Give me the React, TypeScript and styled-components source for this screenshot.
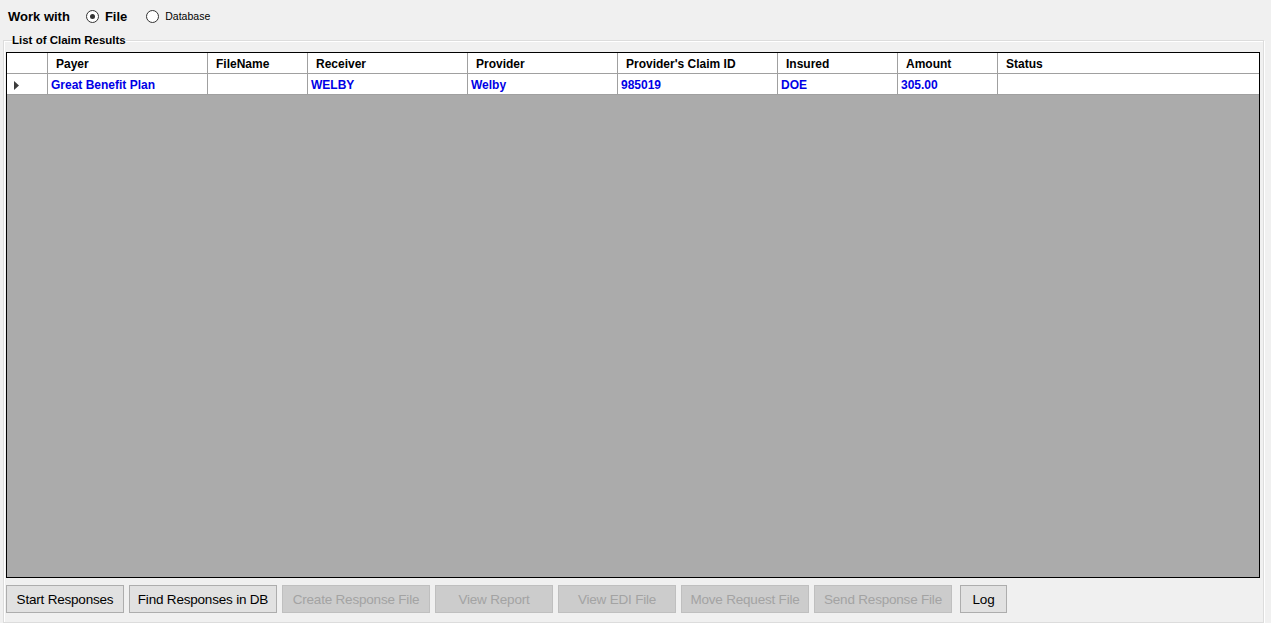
import styled, { createGlobalStyle } from "styled-components";

const GlobalStyle = createGlobalStyle`
  html, body {
    margin: 0;
    padding: 0;
    background: #f0f0f0;
  }
  body {
    font-family: "Liberation Sans", Arial, sans-serif;
  }
`;

type Col = { key: string; title: string; width: number | null };

const columns: Col[] = [
  { key: "payer", title: "Payer", width: 160 },
  { key: "file", title: "FileName", width: 100 },
  { key: "receiver", title: "Receiver", width: 160 },
  { key: "provider", title: "Provider", width: 150 },
  { key: "claim", title: "Provider's Claim ID", width: 160 },
  { key: "insured", title: "Insured", width: 120 },
  { key: "amount", title: "Amount", width: 100 },
  { key: "status", title: "Status", width: null },
];

const rows: Record<string, string>[] = [
  {
    payer: "Great Benefit Plan",
    file: "",
    receiver: "WELBY",
    provider: "Welby",
    claim: "985019",
    insured: "DOE",
    amount: "305.00",
    status: "",
  },
];

const buttons = [
  { label: "Start Responses", width: 118, disabled: false },
  { label: "Find Responses in DB", width: 148, disabled: false },
  { label: "Create Response File", width: 148, disabled: true },
  { label: "View Report", width: 118, disabled: true },
  { label: "View EDI File", width: 118, disabled: true },
  { label: "Move Request File", width: 128, disabled: true },
  { label: "Send Response File", width: 138, disabled: true },
  { label: "Log", width: 47, disabled: false, extra: 3 },
];

const template = `41px ${columns
  .map((c) => (c.width ? `${c.width}px` : "1fr"))
  .join(" ")}`;

function App() {
  return (
    <Window>
      <GlobalStyle />
      <TopBar>
        <Caption>Work with</Caption>
        <RadioOption>
          <Radio $checked />
          <RadioLabel $bold>File</RadioLabel>
        </RadioOption>
        <RadioOption>
          <Radio />
          <RadioLabel>Database</RadioLabel>
        </RadioOption>
      </TopBar>
      <Group>
        <Legend>List of Claim Results</Legend>
        <Grid>
          <Row style={{ gridTemplateColumns: template }}>
            <HeadCell />
            {columns.map((c) => (
              <HeadCell key={c.key} $last={!c.width}>
                {c.title}
              </HeadCell>
            ))}
          </Row>
          {rows.map((r, i) => (
            <Row key={i} style={{ gridTemplateColumns: template }}>
              <DataCell $rowHeader>
                <svg width="5" height="9" viewBox="0 0 5 9">
                  <path d="M0 0 L5 4.5 L0 9 Z" fill="#3c3c3c" />
                </svg>
              </DataCell>
              {columns.map((c) => (
                <DataCell key={c.key} $last={!c.width}>
                  {r[c.key]}
                </DataCell>
              ))}
            </Row>
          ))}
        </Grid>
        <ButtonBar>
          {buttons.map((b) => (
            <Button
              key={b.label}
              disabled={b.disabled}
              $width={b.width}
              $extra={b.extra ?? 0}
            >
              {b.label}
            </Button>
          ))}
        </ButtonBar>
      </Group>
    </Window>
  );
}

const Window = styled.div`
  width: 1271px;
  height: 623px;
  box-sizing: border-box;
  display: flex;
  flex-direction: column;
  background: #f0f0f0;
  overflow: hidden;
`;

const TopBar = styled.div`
  height: 34px;
  display: flex;
  align-items: center;
  padding: 0 0 2px 8px;
  box-sizing: border-box;
`;

const Caption = styled.span`
  font-size: 13px;
  font-weight: bold;
  color: #000;
  margin-right: 16px;
`;

const RadioOption = styled.label`
  display: flex;
  align-items: center;
  gap: 6px;
  margin-right: 19px;
`;

const Radio = styled.span<{ $checked?: boolean }>`
  width: 11px;
  height: 11px;
  border-radius: 50%;
  border: 1px solid #333;
  background: #fff;
  display: flex;
  align-items: center;
  justify-content: center;
  &::after {
    content: "";
    width: 5px;
    height: 5px;
    border-radius: 50%;
    background: #333;
    display: ${(p) => (p.$checked ? "block" : "none")};
  }
`;

const RadioLabel = styled.span<{ $bold?: boolean }>`
  font-size: ${(p) => (p.$bold ? "13px" : "10.5px")};
  font-weight: ${(p) => (p.$bold ? "bold" : "normal")};
  color: #000;
`;

const Group = styled.fieldset`
  margin: 0 7px 0 3px;
  padding: 5px 3px 7px 2px;
  border: 1px solid #dcdcdc;
  box-shadow: inset 1px 1px 0 #fff, 1px 1px 0 #fff;
  flex: 1;
  min-height: 0;
  display: flex;
  flex-direction: column;
`;

const Legend = styled.legend`
  font-size: 11.5px;
  font-weight: bold;
  color: #000;
  padding: 0;
  margin-left: 6px;
  line-height: 13px;
`;

const Grid = styled.div`
  height: 526px;
  flex-shrink: 0;
  box-sizing: border-box;
  border: 1px solid #000;
  background: #ababab;
  display: flex;
  flex-direction: column;
`;

const Row = styled.div`
  display: grid;
  height: 21px;
  flex-shrink: 0;
  background: #fff;
  border-bottom: 1px solid #a0a0a0;
  box-sizing: border-box;
`;

const HeadCell = styled.div<{ $last?: boolean }>`
  border-right: ${(p) => (p.$last ? "none" : "1px solid #a0a0a0")};
  font-size: 12px;
  font-weight: bold;
  color: #000;
  padding: 1px 0 0 8px;
  display: flex;
  align-items: center;
  white-space: nowrap;
  overflow: hidden;
`;

const DataCell = styled.div<{ $rowHeader?: boolean; $last?: boolean }>`
  border-right: ${(p) => (p.$last ? "none" : "1px solid #a0a0a0")};
  font-size: 12px;
  font-weight: bold;
  color: #0000e6;
  padding: 2px 0 0 ${(p) => (p.$rowHeader ? "7px" : "3px")};
  display: flex;
  align-items: center;
  white-space: nowrap;
  overflow: hidden;
`;

const ButtonBar = styled.div`
  display: flex;
  gap: 5px;
  margin-top: 7px;
  flex-shrink: 0;
`;

const Button = styled.button<{ $width: number; $extra: number }>`
  width: ${(p) => p.$width}px;
  height: 28px;
  margin-left: ${(p) => p.$extra}px;
  font-family: "Liberation Sans", Arial, sans-serif;
  font-size: 13.5px;
  color: #000;
  background: #e1e1e1;
  border: 1px solid #adadad;
  border-radius: 0;
  padding: 0;
  white-space: nowrap;
  letter-spacing: -0.2px;
  &:disabled {
    background: #cccccc;
    border-color: #bfbfbf;
    color: #a3a3a3;
  }
`;

export default App;
